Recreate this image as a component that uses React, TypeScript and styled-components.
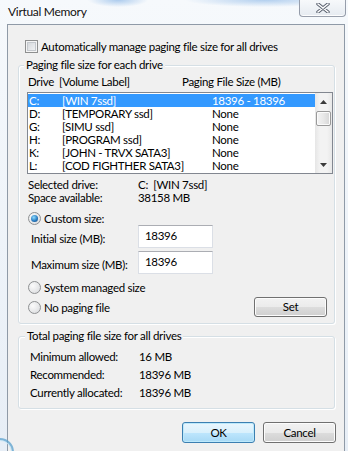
import React from "react";
import styled, { createGlobalStyle } from "styled-components";

const FONT = `Lato, "Noto Sans", sans-serif`;

const Global = createGlobalStyle`
  html, body { margin: 0; padding: 0; }
  body {
    width: 348px; height: 451px; overflow: hidden;
    font-family: ${FONT};
    font-size: 11.5px; letter-spacing: -0.3px; color: #000;
  }
`;

const Window = styled.div`
  position: relative;
  width: 348px;
  height: 451px;
  overflow: hidden;
  display: flex;
  flex-direction: column;
  background:
    radial-gradient(ellipse 30px 7px at 118px 0px, rgba(110, 165, 225, 0.55), transparent),
    radial-gradient(ellipse 80px 7px at 265px 0px, rgba(110, 165, 225, 0.5), transparent),
    linear-gradient(#f6f9fc, #e7eef6);
  font-family: ${FONT};
  font-size: 11.5px;
  letter-spacing: -0.3px;
`;

const DesktopRing = styled.span`
  position: absolute;
  left: -14px;
  top: 438px;
  width: 24px;
  height: 24px;
  border-radius: 50%;
  border: 2px solid rgba(90, 160, 205, 0.75);
  box-shadow: inset 0 0 0 1px rgba(200, 230, 245, 0.9);
  pointer-events: none;
`;

const TitleBar = styled.div`
  height: 24px;
  flex: none;
  display: flex;
  align-items: flex-start;
  justify-content: space-between;
  padding: 0 2px 0 8px;
`;

const Title = styled.div`
  font-size: 12px;
  line-height: 24px;
  color: #111;
  text-shadow: 0 0 6px #fff, 0 0 3px #fff;
`;

const CloseButton = styled.div`
  width: 45px;
  height: 16px;
  border: 1px solid rgba(90, 100, 120, 0.6);
  border-top: none;
  border-radius: 0 0 4px 4px;
  background: linear-gradient(#f7f9fb, #e6ebf1);
  box-shadow: inset 0 -1px 0 rgba(255, 255, 255, 0.9);
  display: flex;
  align-items: center;
  justify-content: center;
`;

const Client = styled.div`
  flex: 1;
  margin: 0 3px 0 7px;
  background: #f0f0f0;
  border: 1px solid #8f9aa7;
  border-bottom: none;
  padding: 0 9px 0 10px;
  display: flex;
  flex-direction: column;
`;

const CheckRow = styled.label`
  margin-top: 15px;
  height: 13px;
  padding-left: 7px;
  display: flex;
  align-items: center;
  gap: 3px;
  line-height: 13px;
  white-space: nowrap;
`;

const CheckBox = styled.span`
  width: 13px;
  height: 13px;
  box-sizing: border-box;
  border: 1px solid #8e8f8f;
  background: linear-gradient(135deg, #cfd2d6, #f7f8f9);
  box-shadow: inset 0 0 0 1px #f4f4f4, inset 0 0 0 2px #c4c8cd;
  flex: none;
`;

const Group = styled.div<{ $mt: number; $pt: number; $pb: number }>`
  position: relative;
  margin-top: ${(p) => p.$mt}px;
  padding-top: ${(p) => p.$pt}px;
  padding-bottom: ${(p) => p.$pb}px;
  border: 1px solid #d5dfe5;
  border-radius: 3px;
  box-shadow: inset 1px 1px 0 #fff, 1px 1px 0 #fff;
  display: flex;
  flex-direction: column;
`;

const Legend = styled.span<{ $left: number }>`
  position: absolute;
  top: -8px;
  left: ${(p) => p.$left}px;
  padding: 0 2px;
  background: #f0f0f0;
  line-height: 14px;
  white-space: nowrap;
`;

const HeaderRow = styled.div`
  height: 14px;
  line-height: 14px;
  padding-left: 9px;
  display: grid;
  grid-template-columns: 31px 123px 1fr;
  white-space: nowrap;
`;

const ListBox = styled.div`
  margin: 3px 0 0 8px;
  width: 306px;
  height: 82px;
  box-sizing: border-box;
  border: 1px solid #828790;
  background: #fff;
  display: flex;
`;

const Rows = styled.div`
  flex: 1;
  padding-top: 1px;
  display: flex;
  flex-direction: column;
`;

const DriveRow = styled.div<{ $sel?: boolean }>`
  height: 13px;
  line-height: 13px;
  padding-left: 1px;
  display: grid;
  grid-template-columns: 33px 150px 1fr;
  white-space: nowrap;
  background: ${(p) => (p.$sel ? "#3399ff" : "transparent")};
  color: ${(p) => (p.$sel ? "#fff" : "#000")};
`;

const ScrollBar = styled.div`
  width: 17px;
  flex: none;
  background: linear-gradient(90deg, #e6e6e6, #f3f3f3 30%, #f3f3f3 70%, #e8e8e8);
  display: flex;
  flex-direction: column;
`;

const ArrowBtn = styled.div`
  height: 17px;
  display: flex;
  align-items: center;
  justify-content: center;
`;

const Thumb = styled.div`
  margin: 1px 0 0 1px;
  height: 15px;
  width: 15px;
  box-sizing: border-box;
  border: 1px solid #9a9a9a;
  border-radius: 2px;
  background: linear-gradient(90deg, #f3f3f3, #e8e8e8 50%, #d6d6d6);
  box-shadow: inset 0 0 0 1px #fbfbfb;
`;

const Spacer = styled.div`
  flex: 1;
`;

const InfoRow = styled.div<{ $mt?: number; $h: number; $pl: number; $col: number }>`
  margin-top: ${(p) => p.$mt ?? 0}px;
  height: ${(p) => p.$h}px;
  padding-left: ${(p) => p.$pl}px;
  display: grid;
  grid-template-columns: ${(p) => p.$col}px 1fr;
  align-items: center;
  white-space: nowrap;
`;

const FieldRow = styled.div<{ $mt?: number }>`
  margin-top: ${(p) => p.$mt ?? 0}px;
  height: 23px;
  padding-left: 12px;
  display: grid;
  grid-template-columns: 107px 75px;
  align-items: center;
  white-space: nowrap;
`;

const FieldLabel = styled.span`
  padding-top: 3px;
`;

const TextBox = styled.div`
  height: 23px;
  box-sizing: border-box;
  border: 1px solid #dbdfe6;
  border-top-color: #abadb3;
  background: #fff;
  padding: 2px 0 0 6px;
  line-height: 15px;
`;

const RadioRow = styled.div<{ $mt?: number; $h: number }>`
  margin-top: ${(p) => p.$mt ?? 0}px;
  height: ${(p) => p.$h}px;
  padding-left: 9px;
  display: flex;
  align-items: center;
  gap: 3px;
  white-space: nowrap;
`;

const Radio = styled.span<{ $on?: boolean }>`
  width: 13px;
  height: 13px;
  box-sizing: border-box;
  border-radius: 50%;
  border: 1px solid #8e9092;
  background: radial-gradient(circle at 35% 35%, #fbfbfb, #d6d8db);
  display: flex;
  align-items: center;
  justify-content: center;
  flex: none;
  &::after {
    content: "";
    display: ${(p) => (p.$on ? "block" : "none")};
    width: 7px;
    height: 7px;
    border-radius: 50%;
    background: radial-gradient(circle at 40% 35%, #8fdcff, #2a7dc2 55%, #0f3f74);
  }
`;

const Button = styled.div<{ $default?: boolean }>`
  width: 73px;
  height: 21px;
  box-sizing: border-box;
  border-radius: 3px;
  border: 1px solid ${(p) => (p.$default ? "#3c7fb1" : "#707070")};
  background: ${(p) =>
    p.$default
      ? "linear-gradient(#eaf6fd, #d9f0fc 50%, #bee6fd 50%, #a7d9f5)"
      : "linear-gradient(#f2f2f2, #ebebeb 50%, #dddddd 50%, #cfcfcf)"};
  box-shadow: inset 0 0 0 1px ${(p) => (p.$default ? "#bde9fb" : "#fcfcfc")};
  display: flex;
  align-items: center;
  justify-content: center;
  line-height: 14px;
`;

const SetButton = styled(Button)`
  height: 20px;
  margin-left: auto;
  margin-right: 7px;
`;

const ButtonRow = styled.div`
  margin-top: 13px;
  margin-right: -1px;
  display: flex;
  justify-content: flex-end;
  gap: 8px;
`;

const drives = [
  ["C:", "[WIN 7ssd]", "18396 - 18396"],
  ["D:", "[TEMPORARY ssd]", "None"],
  ["G:", "[SIMU ssd]", "None"],
  ["H:", "[PROGRAM ssd]", "None"],
  ["K:", "[JOHN - TRVX SATA3]", "None"],
  ["L:", "[COD FIGHTHER SATA3]", "None"],
];

const totals = [
  ["Minimum allowed:", "16 MB"],
  ["Recommended:", "18396 MB"],
  ["Currently allocated:", "18396 MB"],
];

const CloseIcon = () => (
  <svg width="14" height="10" viewBox="0 0 14 10">
    <path d="M2 1 L12 9 M12 1 L2 9" stroke="#5a6270" strokeWidth="3.4" strokeLinecap="round" />
    <path d="M2 1 L12 9 M12 1 L2 9" stroke="#fff" strokeWidth="1.6" strokeLinecap="round" />
  </svg>
);

const Arrow = ({ up }: { up?: boolean }) => (
  <svg width="7" height="4" viewBox="0 0 7 4">
    <polygon points={up ? "3.5,0 7,4 0,4" : "0,0 7,0 3.5,4"} fill="#3b3b3b" />
  </svg>
);

export default function App() {
  return (
    <>
      <Global />
      <Window>
        <TitleBar>
          <Title>Virtual Memory</Title>
          <CloseButton>
            <CloseIcon />
          </CloseButton>
        </TitleBar>
        <Client>
          <CheckRow>
            <CheckBox />
            <span>Automatically manage paging file size for all drives</span>
          </CheckRow>

          <Group $mt={12} $pt={9} $pb={6}>
            <Legend $left={5}>Paging file size for each drive</Legend>
            <HeaderRow>
              <span>Drive</span>
              <span>[Volume Label]</span>
              <span>Paging File Size (MB)</span>
            </HeaderRow>
            <ListBox>
              <Rows>
                {drives.map((d, i) => (
                  <DriveRow key={d[0]} $sel={i === 0}>
                    <span>{d[0]}</span>
                    <span>{d[1]}</span>
                    <span>{d[2]}</span>
                  </DriveRow>
                ))}
              </Rows>
              <ScrollBar>
                <ArrowBtn>
                  <Arrow up />
                </ArrowBtn>
                <Thumb />
                <Spacer />
                <ArrowBtn>
                  <Arrow />
                </ArrowBtn>
              </ScrollBar>
            </ListBox>
            <InfoRow $mt={4} $h={13} $pl={9} $col={110}>
              <span>Selected drive:</span>
              <span>C:&nbsp;&nbsp;[WIN 7ssd]</span>
            </InfoRow>
            <InfoRow $h={13} $pl={9} $col={110}>
              <span>Space available:</span>
              <span>38158 MB</span>
            </InfoRow>
            <RadioRow $mt={8} $h={13}>
              <Radio $on />
              <span>Custom size:</span>
            </RadioRow>
            <FieldRow>
              <FieldLabel>Initial size (MB):</FieldLabel>
              <TextBox>18396</TextBox>
            </FieldRow>
            <FieldRow $mt={3}>
              <FieldLabel>Maximum size (MB):</FieldLabel>
              <TextBox>18396</TextBox>
            </FieldRow>
            <RadioRow $mt={7} $h={13}>
              <Radio />
              <span>System managed size</span>
            </RadioRow>
            <RadioRow $mt={3} $h={20}>
              <Radio />
              <span>No paging file</span>
              <SetButton>Set</SetButton>
            </RadioRow>
          </Group>

          <Group $mt={12} $pt={10} $pb={7}>
            <Legend $left={6}>Total paging file size for all drives</Legend>
            {totals.map((t) => (
              <InfoRow key={t[0]} $h={18} $pl={11} $col={109}>
                <span>{t[0]}</span>
                <span>{t[1]}</span>
              </InfoRow>
            ))}
          </Group>

          <ButtonRow>
            <Button $default>OK</Button>
            <Button>Cancel</Button>
          </ButtonRow>
        </Client>
        <DesktopRing />
      </Window>
    </>
  );
}
